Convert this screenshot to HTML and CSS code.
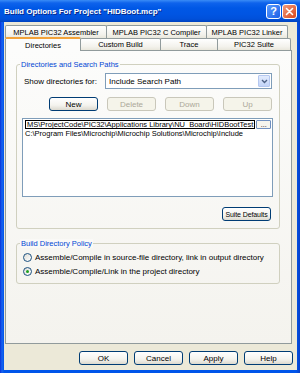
FILE: index.html
```html
<!DOCTYPE html>
<html>
<head>
<meta charset="utf-8">
<link rel="stylesheet" href="styles.css">
</head>
<body>
<div class="win">
  <div class="titlebar">
    <span class="title">Build Options For Project "HIDBoot.mcp"</span>
    <span class="tb help">?</span>
    <span class="tb close"><svg width="9" height="9" viewBox="0 0 9 9"><path d="M1.5 1.5L7.5 7.5M7.5 1.5L1.5 7.5" stroke="#fff" stroke-width="1.6" stroke-linecap="round"/></svg></span>
  </div>
  <div class="body">
    <div class="tabs">
      <div class="tabrow row1">
        <div class="tab t-asm">MPLAB PIC32 Assembler</div>
        <div class="tab t-cc">MPLAB PIC32 C Compiler</div>
        <div class="tab t-ld">MPLAB PIC32 Linker</div>
      </div>
      <div class="tabrow row2">
        <div class="tab t-dir sel">Directories</div>
        <div class="tab t-cb">Custom Build</div>
        <div class="tab t-tr">Trace</div>
        <div class="tab t-ps">PIC32 Suite</div>
      </div>
    </div>
    <div class="panel">
      <div class="group g1">
        <span class="legend">Directories and Search Paths</span>
        <div class="show-row">
          <span class="lbl">Show directories for:</span>
          <div class="select"><span class="sel-text">Include Search Path</span><span class="arrow"><svg width="7" height="5" viewBox="0 0 7 5"><path d="M1 1L3.5 3.5L6 1" stroke="#4d6185" stroke-width="1.4" fill="none"/></svg></span></div>
        </div>
        <div class="btn-row">
          <span class="btn">New</span>
          <span class="btn dis">Delete</span>
          <span class="btn dis">Down</span>
          <span class="btn dis">Up</span>
        </div>
        <div class="list">
          <div class="item edit"><span class="edit-text">MS\ProjectCode\PIC32\Applications Library\NU_Board\HIDBootTest</span><span class="dots">...</span></div>
          <div class="item">C:\Program Files\Microchip\Microchip Solutions\Microchip\Include</div>
        </div>
        <div class="defaults-row"><span class="btn small">Suite Defaults</span></div>
      </div>
      <div class="group g2">
        <span class="legend">Build Directory Policy</span>
        <div class="radio-row"><span class="radio"></span><span>Assemble/Compile in source-file directory, link in output directory</span></div>
        <div class="radio-row"><span class="radio on"></span><span>Assemble/Compile/Link in the project directory</span></div>
      </div>
    </div>
    <div class="footer">
      <span class="btn">OK</span>
      <span class="btn">Cancel</span>
      <span class="btn">Apply</span>
      <span class="btn">Help</span>
    </div>
  </div>
</div>
</body>
</html>
```
FILE: styles.css
```css
* { box-sizing: border-box; margin: 0; padding: 0; }
body {
  width: 300px; height: 373px; overflow: hidden;
  font-family: "Liberation Sans", Arial, sans-serif;
  font-size: 8px; color: #000; background: #fff;
}
.win {
  width: 300px; height: 373px;
  display: flex; flex-direction: column;
  background: linear-gradient(90deg, #0831d9 0, #1663f0 2px, #0055ea 4px, #0055ea 296px, #0840c8 300px);
}
.titlebar {
  height: 22px; flex: none;
  display: flex; align-items: center;
  padding: 0 3px 0 4px;
  background: linear-gradient(#3a8cf6 0, #0e63ec 3px, #0058e6 8px, #0055e3 14px, #0050da 19px, #0043c0 22px);
}
.title {
  flex: 1; color: #fff; font-weight: bold; font-size: 8px;
  font-family: "Liberation Sans", Arial, sans-serif;
  text-shadow: 1px 1px 0 #0a2a8a; white-space: nowrap;
}
.tb {
  width: 15px; height: 15px; flex: none;
  border: 1px solid #fff; border-radius: 3px;
  display: flex; align-items: center; justify-content: center;
  color: #fff; font-weight: bold; font-size: 11px;
}
.help { background: linear-gradient(135deg, #5a9cff, #1d5fe6); margin-right: 1px; }
.close { background: linear-gradient(135deg, #f09a7c, #d9481c); }
.body {
  flex: 1; margin: 0 3px 3px 4px;
  background: #ece9d8;
  display: flex; flex-direction: column;
}
.tabs { padding-top: 3px; margin-left: 1px; flex: none; }
.tabrow { display: flex; }
.row1 { height: 13px; }
.row2 { height: 12px; }
.tab {
  border: 1px solid #919b9c; border-bottom: none;
  border-radius: 2px 2px 0 0;
  background: linear-gradient(#ffffff, #f3f2ec 70%, #e9e7dc);
  display: flex; align-items: center; justify-content: center;
  font-size: 7.5px; white-space: nowrap;
}
.row1 .tab { margin-right: -1px; }
.row2 .tab { margin-right: -1px; }
.t-asm { width: 102px; }
.t-cc { width: 101px; }
.t-ld { width: 82px; }
.t-dir { width: 76px; }
.t-cb { width: 81px; }
.t-tr { width: 58px; }
.t-ps { width: 74px; }
.tab.sel {
  border-top: 2px solid #f3a33a;
  background: #fcfcfb;
  position: relative; z-index: 1;
  height: 14px; margin-top: -1px;
}
.panel {
  flex: none; height: 294px;
  margin: 0 5px 0 1px;
  border: 1px solid #919b9c;
  background: linear-gradient(#fcfcfb, #f4f3ee);
  padding: 13px 11px 0 10px;
}
.group {
  border: 1px solid #d0d0bf; border-radius: 3px;
  display: flex; flex-direction: column;
}
.legend {
  align-self: flex-start;
  color: #0046d5; font-size: 7.5px;
  margin: -5px 0 0 3px; padding: 0 1px;
  background: #faf9f7; line-height: 9px;
}
.g1 { height: 165px; }
.show-row {
  display: flex; align-items: center;
  margin: 4px 0 0 7px; height: 16px;
}
.lbl { width: 81px; }
.select {
  width: 167px; height: 16px;
  border: 1px solid #7f9db9; background: #fff;
  display: flex; align-items: center; padding-left: 3px;
}
.sel-text { flex: 1; }
.arrow {
  width: 12px; height: 12px; margin-right: 1px;
  border: 1px solid #b5c8f0; border-radius: 1px;
  background: linear-gradient(#e2ebfd, #c2d4f8);
  display: flex; align-items: center; justify-content: center;
}
.btn-row {
  display: flex; gap: 9px; margin: 8px 0 0 32px;
}
.btn {
  width: 49px; height: 14px;
  border: 1px solid #003c74; border-radius: 3px;
  background: linear-gradient(#ffffff, #f4f3ee 60%, #dcd9cf);
  display: flex; align-items: center; justify-content: center;
  white-space: nowrap;
}
.btn.small { font-size: 7px; letter-spacing: -0.1px; }
.btn.dis { border-color: #c9c7ba; color: #aca899; background: #f5f4ea; }
.list {
  margin: 7px 6px 0 5px; height: 79px;
  border: 1px solid #7f9db9; background: #fff;
  padding: 1px 1px 0 1px;
}
.item { height: 9px; line-height: 9px; white-space: nowrap; font-size: 7.5px; padding-left: 1px; }
.item.edit { display: flex; align-items: center; }
.edit-text { border: 1px solid #000; padding: 0 1px; line-height: 7px; height: 9px; }
.dots {
  width: 15px; height: 9px; margin-left: 1px;
  border: 1px solid #6f8fc0; border-radius: 1px; background: #f5f4ee;
  display: flex; align-items: flex-end; justify-content: center;
  line-height: 6px; font-size: 7px;
}
.defaults-row { display: flex; justify-content: flex-end; margin: 10px 8px 0 0; }
.g2 { height: 41px; margin-top: 14px; }
.radio-row {
  display: flex; align-items: center; gap: 3px;
  margin-left: 6px; height: 14px; font-size: 8px;
}
.g2 .radio-row:first-of-type { margin-top: 2px; }
.radio {
  width: 9px; height: 9px; border-radius: 50%;
  border: 1px solid #1c5180; background: linear-gradient(135deg, #dcdcd6, #fff);
  display: flex; align-items: center; justify-content: center;
}
.radio.on::after {
  content: ""; width: 3px; height: 3px; border-radius: 50%;
  background: #21a121;
}
.footer {
  display: flex; justify-content: flex-end; gap: 6px;
  margin: 7px 4px 0 0;
}
```
